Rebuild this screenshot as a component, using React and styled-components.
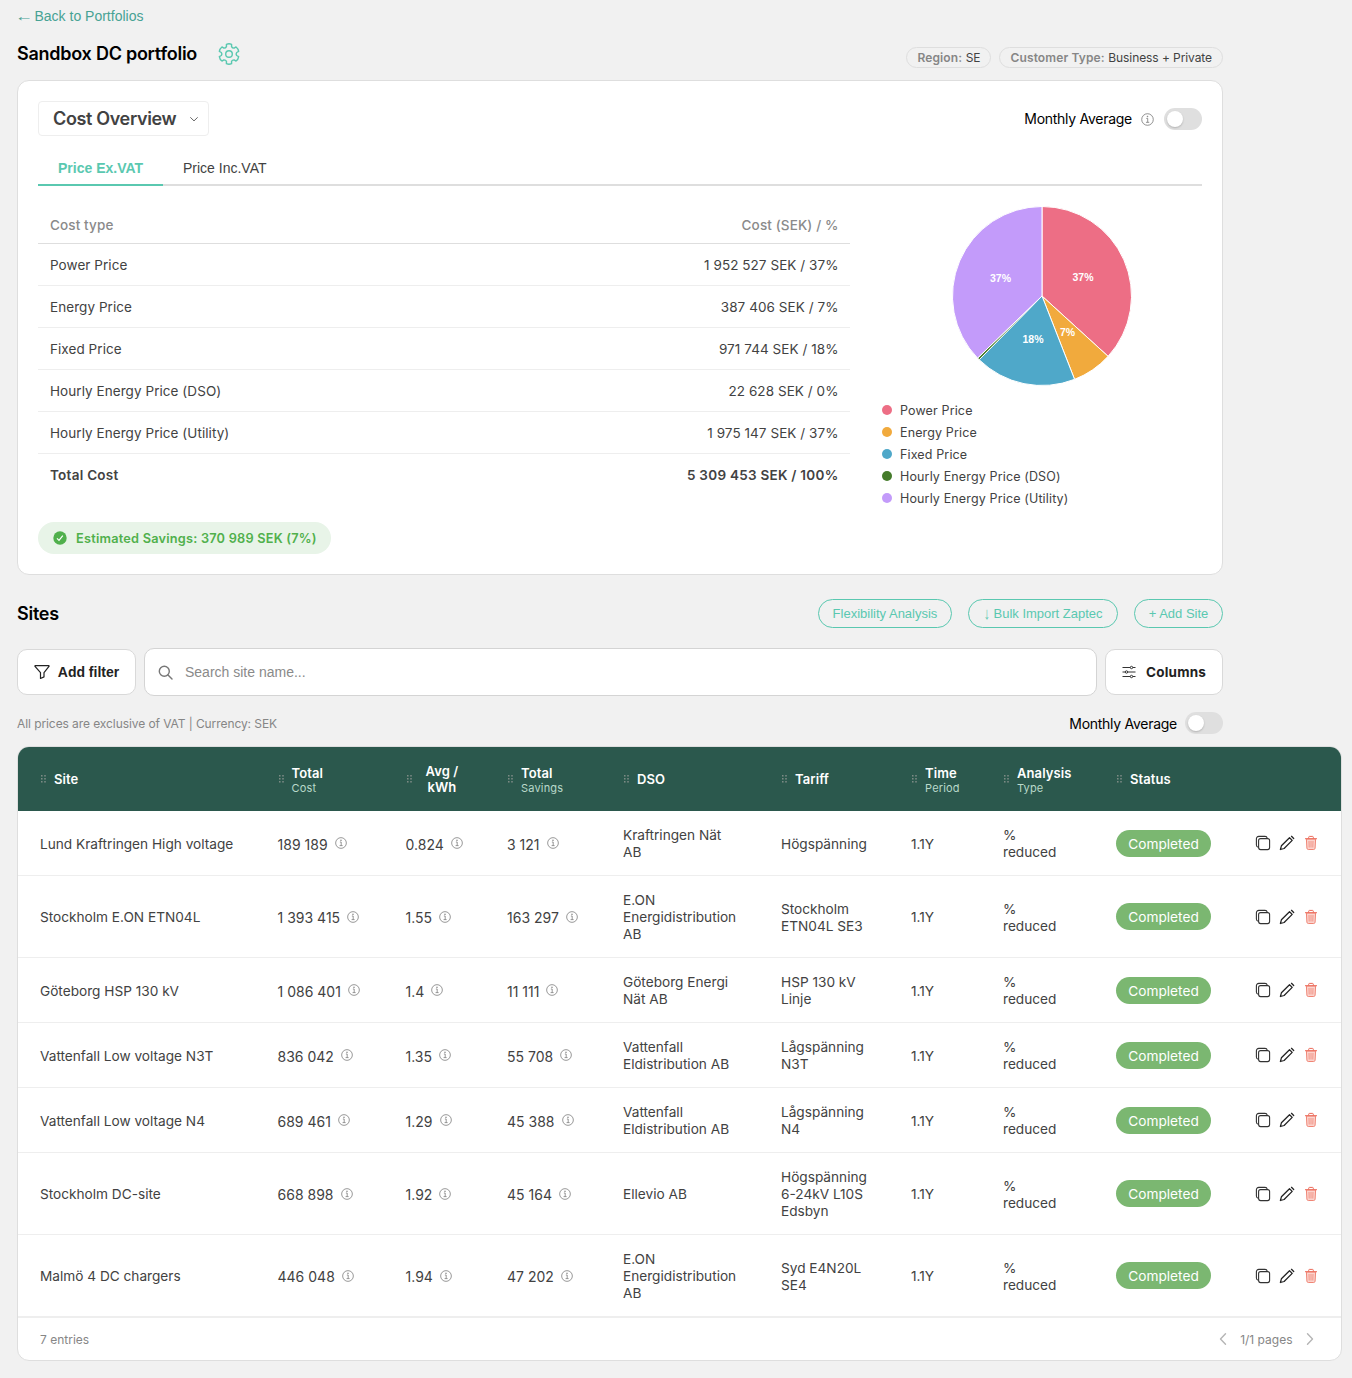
import React from 'react';
import styled, { createGlobalStyle } from 'styled-components';

const Global = createGlobalStyle`
  *{box-sizing:border-box}
  body{margin:0;background:#f1f1f1;color:#000;font-family:Inter,"Noto Sans",sans-serif;}
  button,input{font-family:"Liberation Sans",Arial,sans-serif}
  table{border-collapse:separate;border-spacing:0}
`;
const Page = styled.main`width:1352px;height:1378px;padding:8px 0 0 17px;overflow:hidden;`;
const Content = styled.div`width:1206px;`;
const Back = styled.a`display:flex;align-items:center;gap:3.5px;height:17px;font:14px/17px "Liberation Sans",Arial,sans-serif;color:#47a294;`;
const LeftArrow = styled.span`width:14px;transform:scaleX(1.3);`;
const DownArrow = styled.span`display:inline-block;transform:scaleY(1.3);margin-right:3.6px;`;
const TitleRow = styled.header`display:flex;height:55px;align-items:center;padding-top:3px;`;
const Title = styled.h1`margin:0 20.5px 0 0;font-size:18px;line-height:22px;font-weight:600;letter-spacing:-.25px;white-space:nowrap;`;
const Badges = styled.div`display:flex;gap:8px;margin-left:auto;padding-top:6px;`;
const Badge = styled.span`height:21px;border:1px solid #dedede;border-radius:11px;padding:0 10px;font-size:12px;line-height:20px;color:#424242;white-space:nowrap;letter-spacing:-.08px;b{font-weight:600;color:#868686;margin-right:3.6px;letter-spacing:.12px}`;
const Card = styled.section`height:495px;background:#fff;border:1px solid #dedede;border-radius:12px;padding:20px;`;
const CardTop = styled.div`display:flex;justify-content:space-between;height:36px;align-items:flex-start;`;
const Select = styled.div`display:flex;align-items:center;width:171px;height:35px;border:1px solid #eee;border-radius:4px;padding-left:14px;font-size:18px;font-weight:600;color:#424242;letter-spacing:-.35px;white-space:nowrap;svg{margin-left:13px}`;
const ToggleRow = styled.div`display:flex;align-items:center;font-size:14px;line-height:20px;letter-spacing:-.27px;white-space:nowrap;color:#000;padding-top:${p => p.$top || 0}px;`;
const ToggleLabel = styled.span`margin-right:${p => p.$gap || 0}px;padding-top:${p => p.$gap ? 0 : 1}px;`;
const Track = styled.span`width:38px;height:22px;border-radius:11px;background:#dfdfdf;padding:3px;margin-left:${p => p.$gap}px;`;
const Knob = styled.span`display:block;width:16px;height:16px;border-radius:50%;background:#fff;box-shadow:0 1px 2px #0003;`;
const Tabs = styled.div`display:flex;height:36px;margin-top:13px;border-bottom:2px solid #dedede;`;
const Tab = styled.div`height:36px;padding:10px 20px 0;width:${p => p.$active ? '125px' : 'auto'};font:${p => p.$active ? '700' : '400'} 14px/16px "Liberation Sans",Arial,sans-serif;white-space:nowrap;color:${p => p.$active ? '#5ac8b0' : '#424242'};border-bottom:${p => p.$active ? '2px solid #5ac8b0' : '0'};`;
const Overview = styled.div`display:flex;gap:32px;padding-top:20px;height:323px;`;
const Costs = styled.div`width:812px;font-size:13.5px;color:#424242;padding-top:1px;`;
const CostRow = styled.div`display:flex;justify-content:space-between;padding:0 11.5px 0 12px;height:${p => p.$head ? 37 : 42}px;line-height:${p => p.$head ? 36 : 42}px;font-weight:${p => p.$total ? 600 : p.$head ? 500 : 400};letter-spacing:${p => p.$total ? .26 : p.$head ? .12 : .06}px;color:${p => p.$head ? '#8a8a8a' : '#424242'};border-bottom:${p => p.$total ? '0' : '1px solid ' + (p.$head ? '#dedede' : '#eee')};`;
const ChartSide = styled.div`width:320px;`;
const Pie = styled.svg`display:block;margin:0 0 0 70px;text{font:700 10.5px "Liberation Sans",Arial,sans-serif;fill:#fff;text-anchor:middle}`;
const Legend = styled.ul`list-style:none;margin:13px 0 0;padding:0;`;
const LegendItem = styled.li`display:flex;align-items:center;height:22px;font-size:12.5px;color:#424242;letter-spacing:.14px;&::before{content:'';width:10px;height:10px;border-radius:50%;background:${p => p.$color};margin-right:8px}`;
const Savings = styled.div`display:flex;align-items:center;width:293px;height:32px;margin-top:13px;padding-left:15px;border-radius:16px;background:#e8f4e8;color:#50b04c;font-size:12.75px;font-weight:600;letter-spacing:.22px;white-space:nowrap;svg{margin-right:9px}`;
const SitesHead = styled.div`display:flex;align-items:center;height:29px;margin-top:24px;`;
const Actions = styled.div`display:flex;gap:16px;margin-left:auto;`;
const Pill = styled.button`display:flex;align-items:center;justify-content:center;height:29px;width:${p => p.$w}px;border:1px solid #5ac8b0;border-radius:15px;background:transparent;color:#5ac8b0;font-size:13px;padding:0;white-space:nowrap;`;
const Filters = styled.div`display:flex;align-items:center;gap:8px;margin-top:20px;`;
const Tool = styled.button`display:flex;align-items:center;justify-content:center;gap:${p => p.$gap}px;width:${p => p.$w}px;height:46px;border:1px solid #d9d9d9;border-radius:10px;background:#fff;color:#222;font:${p => p.$inter ? '700 13.5px Inter,sans-serif' : '700 14px "Liberation Sans",Arial,sans-serif'};letter-spacing:${p => p.$inter ? .22 : 0}px;padding:0;white-space:nowrap;`;
const Search = styled.label`display:flex;align-items:center;flex:1;height:48px;border:1px solid #d4d4d4;border-radius:10px;background:#fff;padding-left:13px;input{border:0;outline:0;margin-left:12px;padding:0;font-size:14px;width:500px;background:transparent}input::placeholder{color:#8a8a8a}`;
const Note = styled.div`display:flex;justify-content:space-between;align-items:center;height:50px;padding-top:4px;color:#868686;font-size:12px;letter-spacing:-.08px;`;
const TableCard = styled.section`width:1325px;border:1px solid #dedede;border-radius:12px;overflow:hidden;background:#fff;`;
const Table = styled.table`width:1323px;table-layout:fixed;`;
const Col = styled.col`width:${p => p.$w}px;`;
const Th = styled.th`height:64px;background:#2b584d;color:#fff;text-align:left;padding:0 0 0 22px;font-size:13px;line-height:16px;font-weight:600;letter-spacing:.1px;white-space:pre-line;`;
const HeadCell = styled.div`display:flex;align-items:center;svg{margin:0 6px 0 0;flex:none}small{display:block;margin:1px 0 -1px;font-size:11px;line-height:13px;font-weight:400;color:#b9d9ca;letter-spacing:.18px}`;
const HeadText = styled.div`text-align:${p => p.$center ? 'center' : 'left'};padding-left:${p => p.$center ? 6 : 0}px;`;
const Td = styled.td`height:${p => p.$h}px;border-bottom:${p => p.$last ? 2 : 1}px solid #eee;padding:${p => p.$control ? 0 : 2}px 0 0 22px;font-size:13.65px;line-height:17px;color:#424242;white-space:pre-line;`;
const Metric = styled.div`display:flex;align-items:center;font-size:14px;white-space:nowrap;letter-spacing:.01px;svg{margin:0 0 1.4px 7px}`;
const Status = styled.span`display:block;width:95px;height:27px;border-radius:14px;background:#7bb771;color:#fff;text-align:center;line-height:28px;font-size:13.7px;`;
const RowActions = styled.div`display:flex;align-items:center;gap:8px;`;
const Footer = styled.footer`display:flex;justify-content:space-between;align-items:center;height:42px;padding:0 24px 0 22px;color:#868686;font-size:12px;`;
const Pages = styled.div`display:flex;align-items:center;gap:10.5px;`;

const Info = ({ s = 12 }) => <svg width={s} height={s} viewBox="0 0 12 12" fill="none" stroke="#777" strokeWidth=".75"><circle cx="6" cy="6" r="5.35"/><path d="M4.9 5h1.3v3.5M4.6 8.6h3"/><circle cx="6" cy="3.2" r=".35" fill="#777"/></svg>;
const Toggle = ({ gap = 10 }) => <Track $gap={gap}><Knob/></Track>;
const Chevron = ({ right }) => <svg width="14" height="14" viewBox="0 0 14 14" fill="none" stroke="#b5b5b5" strokeWidth="1.4" strokeLinecap="round" strokeLinejoin="round"><path d={right ? 'm4.5 1.8 5 5.2-5 5.2' : 'm9.5 1.8-5 5.2 5 5.2'}/></svg>;
const gearPath = Array.from({ length: 6 }, (_, k) => {
  const p = (a, r) => { const t = (a + k * 60 - 90) * Math.PI / 180; return `${(11 + r * Math.cos(t)).toFixed(2)} ${(11 + r * Math.sin(t)).toFixed(2)}`; };
  return `${k ? 'L' : 'M'}${p(-15, 10)}Q${p(0, 10.7)} ${p(15, 10)}L${p(19, 7.8)}Q${p(30, 6.7)} ${p(41, 7.8)}`;
}).join('') + 'Z';
const Gear = () => <svg width="22" height="22" viewBox="0 0 22 22" fill="none" stroke="#5ac8b0" strokeWidth="1.4" strokeLinejoin="round"><path d={gearPath}/><circle cx="11" cy="11" r="3.3"/></svg>;
const Grip = () => <svg width="8" height="10" viewBox="0 0 8 10" fill="#84908b">{[1,4,7].map(y => <React.Fragment key={y}><rect x="1" y={y} width="1.6" height="1.6" rx=".4"/><rect x="4.2" y={y} width="1.6" height="1.6" rx=".4"/></React.Fragment>)}</svg>;
const Copy = () => <svg width="16" height="16" viewBox="0 0 16 16" fill="none" stroke="#333" strokeWidth="1.1"><rect x="3.6" y="3.6" width="11" height="11" rx="2"/><path d="M3.2 12.2C2 12 1.4 11.2 1.4 10V3.8c0-1.5.9-2.4 2.4-2.4H10c1.2 0 2 .6 2.2 1.7"/></svg>;
const Pencil = () => <svg width="16" height="16" viewBox="0 0 16 16" fill="none" stroke="#222" strokeWidth="1.25" strokeLinejoin="round" strokeLinecap="round"><path d="m1.4 14.5 1-3.7 8.1-8.1 2.7 2.7-8.1 8.1-3.7 1ZM12.5 1.3l2.2 2.2"/></svg>;
const Trash = () => <svg width="16" height="16" viewBox="0 0 16 16" fill="none" stroke="#f08575" strokeWidth="1"><path fill="#fbd3cd" d="M3.4 4h9.2l-.5 9.2c-.1.800-.6 1.300-1.400 1.300H5.300c-.8 0-1.300-.5-1.400-1.300Z"/><path stroke="#ec6a59" d="M2 3.700h12M5.700 3.500V2.200c0-.5.300-.8.800-.8h3c.5 0 .8.300.8.800v1.300"/><path strokeWidth=".8" d="m6 6 .2 6.500M8 6v6.500M10 6l-.2 6.500"/></svg>;

const costs = [
  { name: 'Power Price', label: '1 952 527 SEK / 37%', value: 1952527, color: '#ed6e85' },
  { name: 'Energy Price', label: '387 406 SEK / 7%', value: 387406, color: '#f1aa3d' },
  { name: 'Fixed Price', label: '971 744 SEK / 18%', value: 971744, color: '#4fa8c9' },
  { name: 'Hourly Energy Price (DSO)', label: '22 628 SEK / 0%', value: 22628, color: '#457b2b' },
  { name: 'Hourly Energy Price (Utility)', label: '1 975 147 SEK / 37%', value: 1975147, color: '#c39bfa' },
];
const total = costs.reduce((n, c) => n + c.value, 0);
let sum = 0;
const slices = costs.map(c => {
  const a = sum / total * Math.PI * 2; sum += c.value; const b = sum / total * Math.PI * 2;
  const at = t => `${90 + 89.5 * Math.sin(t)} ${90 - 89.5 * Math.cos(t)}`;
  return { color: c.color, d: `M90 90L${at(a)}A89.5 89.5 0 0 1 ${at(b)}Z` };
});
const columns = [['Site','',237.5],['Total','Cost',128],['Avg /\nkWh','',101.5],['Total','Savings',116],['DSO','',158],['Tariff','',130],['Time','Period',92],['Analysis','Type',113],['Status','',139],[null,'',108]];
const sites = [
  [65,'Lund Kraftringen High voltage','189 189','0.824','3 121','Kraftringen Nät\nAB','Högspänning'],
  [82,'Stockholm E.ON ETN04L','1 393 415','1.55','163 297','E.ON\nEnergidistribution\nAB','Stockholm\nETN04L SE3'],
  [65,'Göteborg HSP 130 kV','1 086 401','1.4','11 111','Göteborg Energi\nNät AB','HSP 130 kV\nLinje'],
  [65,'Vattenfall Low voltage N3T','836 042','1.35','55 708','Vattenfall\nEldistribution AB','Lågspänning\nN3T'],
  [65,'Vattenfall Low voltage N4','689 461','1.29','45 388','Vattenfall\nEldistribution AB','Lågspänning\nN4'],
  [82,'Stockholm DC-site','668 898','1.92','45 164','Ellevio AB','Högspänning\n6-24kV L10S\nEdsbyn'],
  [83,'Malmö 4 DC chargers','446 048','1.94','47 202','E.ON\nEnergidistribution\nAB','Syd E4N20L\nSE4'],
];

function SiteRow({ site, last }) {
  const [h, name, cost, avg, savings, dso, tariff] = site;
  const cell = { $h: h, $last: last };
  return <tr>
    <Td {...cell}>{name}</Td>
    {[cost, avg, savings].map((v, i) => <Td key={i} {...cell}><Metric><span>{v}</span><Info/></Metric></Td>)}
    <Td {...cell}>{dso}</Td>
    <Td {...cell}>{tariff}</Td>
    <Td {...cell}>1.1Y</Td>
    <Td {...cell}>{'%\nreduced'}</Td>
    <Td {...cell} $control><Status>Completed</Status></Td>
    <Td {...cell} $control><RowActions><Copy/><Pencil/><Trash/></RowActions></Td>
  </tr>;
}

export default function App() {
  return <><Global/><Page><Content>
    <Back><LeftArrow>←</LeftArrow><span>Back to Portfolios</span></Back>
    <TitleRow><Title>Sandbox DC portfolio</Title><Gear/><Badges><Badge><b>Region:</b>SE</Badge><Badge><b>Customer Type:</b>Business + Private</Badge></Badges></TitleRow>
    <Card>
      <CardTop><Select>Cost Overview<svg width="10" height="10" viewBox="0 0 10 10" fill="none" stroke="#666"><path d="m1.3 3.3 3.7 3.6 3.7-3.6"/></svg></Select><ToggleRow $top={7}><ToggleLabel $gap={9}>Monthly Average</ToggleLabel><Info s={13}/><Toggle/></ToggleRow></CardTop>
      <Tabs><Tab $active>Price Ex.VAT</Tab><Tab>Price Inc.VAT</Tab></Tabs>
      <Overview><Costs>
        <CostRow $head><span>Cost type</span><span>Cost (SEK) / %</span></CostRow>
        {costs.map(c => <CostRow key={c.name}><span>{c.name}</span><span>{c.label}</span></CostRow>)}
        <CostRow $total><span>Total Cost</span><span>5 309 453 SEK / 100%</span></CostRow>
      </Costs><ChartSide>
        <Pie width="180" height="180">{slices.map(s => <path key={s.color} d={s.d} fill={s.color} stroke="#fff"/>)}<text x="131" y="75">37%</text><text x="115.5" y="130">7%</text><text x="81" y="137">18%</text><text x="48.5" y="76">37%</text></Pie>
        <Legend>{costs.map(c => <LegendItem key={c.name} $color={c.color}>{c.name}</LegendItem>)}</Legend>
      </ChartSide></Overview>
      <Savings><svg width="14" height="14" viewBox="0 0 14 14"><circle cx="7" cy="7" r="6.7" fill="#50b04c"/><path d="m4 7.3 2 2 3.8-4.700" fill="none" stroke="#fff" strokeWidth="1.2"/></svg>Estimated Savings: 370 989 SEK (7%)</Savings>
    </Card>
    <SitesHead><Title>Sites</Title><Actions><Pill $w={134}>Flexibility Analysis</Pill><Pill $w={150}><DownArrow>↓</DownArrow>Bulk Import Zaptec</Pill><Pill $w={89}>+ Add Site</Pill></Actions></SitesHead>
    <Filters><Tool $w={119} $gap={8}><svg width="16" height="16" viewBox="0 0 16 16" fill="none" stroke="#222" strokeWidth="1.2" strokeLinejoin="round"><path d="M1.2 1.700h13.600c.3 0 .4.400.2.700L10 8.600v4.300L6.500 14.500V8.600L1 2.400c-.2-.3-.1-.7.2-.7Z"/></svg>Add filter</Tool><Search><svg width="15" height="15" viewBox="0 0 15 15" fill="none" stroke="#777" strokeWidth="1.4"><circle cx="6.3" cy="6.3" r="5"/><path d="m10 10 4 4" strokeLinecap="round"/></svg><input placeholder="Search site name..."/></Search><Tool $w={118} $gap={10} $inter><svg width="14" height="14" viewBox="0 0 14 14" fill="#fff" stroke="#333"><path d="M.5 2.5h13M.5 7h13M.5 11.5h13"/><circle cx="9.5" cy="2.5" r="1.2"/><circle cx="4.5" cy="7" r="1.2"/><circle cx="9.5" cy="11.5" r="1.2"/></svg>Columns</Tool></Filters>
    <Note><span>All prices are exclusive of VAT | Currency: SEK</span><ToggleRow><ToggleLabel>Monthly Average</ToggleLabel><Toggle gap={8}/></ToggleRow></Note>
  </Content>
  <TableCard><Table><colgroup>{columns.map((c, i) => <Col key={i} $w={c[2]}/>)}</colgroup><thead><tr>{columns.map((c, i) => <Th key={i}>{c[0] && <HeadCell><Grip/><HeadText $center={i === 2}>{c[0]}{c[1] && <small>{c[1]}</small>}</HeadText></HeadCell>}</Th>)}</tr></thead><tbody>
    {sites.map((s, i) => <SiteRow key={s[1]} site={s} last={i === sites.length - 1}/>)}
  </tbody></Table><Footer><span>7 entries</span><Pages><Chevron/>1/1 pages<Chevron right/></Pages></Footer></TableCard></Page></>;
}
